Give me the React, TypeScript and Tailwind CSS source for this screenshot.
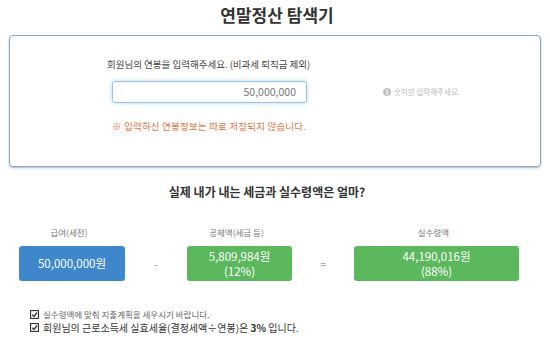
import React from 'react';

const font = "font-['Malgun_Gothic','Noto_Sans_CJK_KR',sans-serif]";

const InfoIcon = () => (
  <svg width="8" height="8" viewBox="0 0 16 16" className="shrink-0">
    <circle cx="8" cy="8" r="8" fill="#c4c4c4" />
    <circle cx="8" cy="4.5" r="1.4" fill="#fff" />
    <rect x="6.8" y="7" width="2.4" height="6" fill="#fff" />
  </svg>
);

const CheckIcon = () => (
  <svg width="9" height="9" viewBox="0 0 16 16" className="shrink-0">
    <rect x="1" y="1" width="14" height="14" fill="#fff" stroke="#333" strokeWidth="2" />
    <path d="M4 8.5 L7 11.5 L12.5 4.5" fill="none" stroke="#333" strokeWidth="2.4" />
  </svg>
);

interface ResultItem {
  label: string;
  amount: string;
  percent?: string;
  color: string;
  width: string;
}

export default function App() {
  const results: ResultItem[] = [
    { label: '급여(세전)', amount: '50,000,000원', color: 'bg-[#3f87cb]', width: 'w-[106px]' },
    { label: '공제액(세금 등)', amount: '5,809,984원', percent: '(12%)', color: 'bg-[#5cb85c]', width: 'w-[105px]' },
    { label: '실수령액', amount: '44,190,016원', percent: '(88%)', color: 'bg-[#5cb85c]', width: 'w-[165px]' },
  ];
  const ops = ['-', '='];

  return (
    <div className={`w-[550px] h-[351px] bg-white overflow-hidden ${font} text-[#333]`}>
      <h1 className="pt-[4px] pl-[4px] text-center text-[17px] font-bold leading-[22px] text-[#333]">
        연말정산 탐색기
      </h1>

      <div className="mx-[9px] mt-[9px] h-[132px] rounded-[4px] border border-[#86a9cc] shadow-[0_1px_2px_rgba(60,90,130,0.45)] pt-[21px] pl-[97px]">
        <p className="text-[9.5px] leading-[14px] text-[#444]">회원님의 연봉을 입력해주세요. (비과세 퇴직금 제외)</p>
        <div className="mt-[10px] flex items-center">
          <div className="ml-[5px] flex h-[22px] w-[195px] items-center justify-end rounded-[3px] border border-[#9cc3e6] bg-white px-[10px] shadow-[0_0_4px_rgba(102,175,233,0.5)]">
            <span className="text-[10.5px] text-[#777]">50,000,000</span>
          </div>
          <div className="ml-[76px] flex items-center gap-[3px] text-[7.5px] text-[#bbb]">
            <InfoIcon />
            <span>숫자만 입력해주세요.</span>
          </div>
        </div>
        <p className="mt-[16px] ml-[5px] text-[9.5px] leading-[14px] tracking-[0.2px] text-[#e5743f]">
          ※ 입력하신 연봉정보는 따로 저장되지 않습니다.
        </p>
      </div>

      <h2 className="mt-[17px] pr-[16px] text-center text-[12px] font-bold leading-[16px] text-[#333]">
        실제 내가 내는 세금과 실수령액은 얼마?
      </h2>

      <div className="mt-[26px] ml-[19px] flex items-end">
        {results.map((r, i) => (
          <React.Fragment key={r.label}>
            <div className={`flex flex-col items-center ${r.width}`}>
              <span className="text-[8.5px] leading-[12px] text-[#777] pr-[6px]">{r.label}</span>
              <div className={`mt-[8px] flex h-[35px] w-full flex-col items-center justify-center rounded-[3px] ${r.color} text-white text-[11.5px] leading-[15px]`}>
                <span>{r.amount}</span>
                {r.percent && <span>{r.percent}</span>}
              </div>
            </div>
            {i < ops.length && (
              <div className="flex h-[35px] w-[62px] items-center justify-center text-[10px] text-[#999]">
                {ops[i]}
              </div>
            )}
          </React.Fragment>
        ))}
      </div>

      <ul className="mt-[27px] ml-[30px] space-y-[1px]">
        <li className="flex items-center gap-[4px] text-[8.5px] leading-[12px] text-[#666]">
          <CheckIcon />
          <span>실수령액에 맞춰 지출계획을 세우시기 바랍니다.</span>
        </li>
        <li className="flex items-center gap-[4px] text-[10px] leading-[13px] text-[#333]">
          <CheckIcon />
          <span>
            회원님의 근로소득세 실효세율(결정세액÷연봉)은 <b>3%</b> 입니다.
          </span>
        </li>
      </ul>
    </div>
  );
}
